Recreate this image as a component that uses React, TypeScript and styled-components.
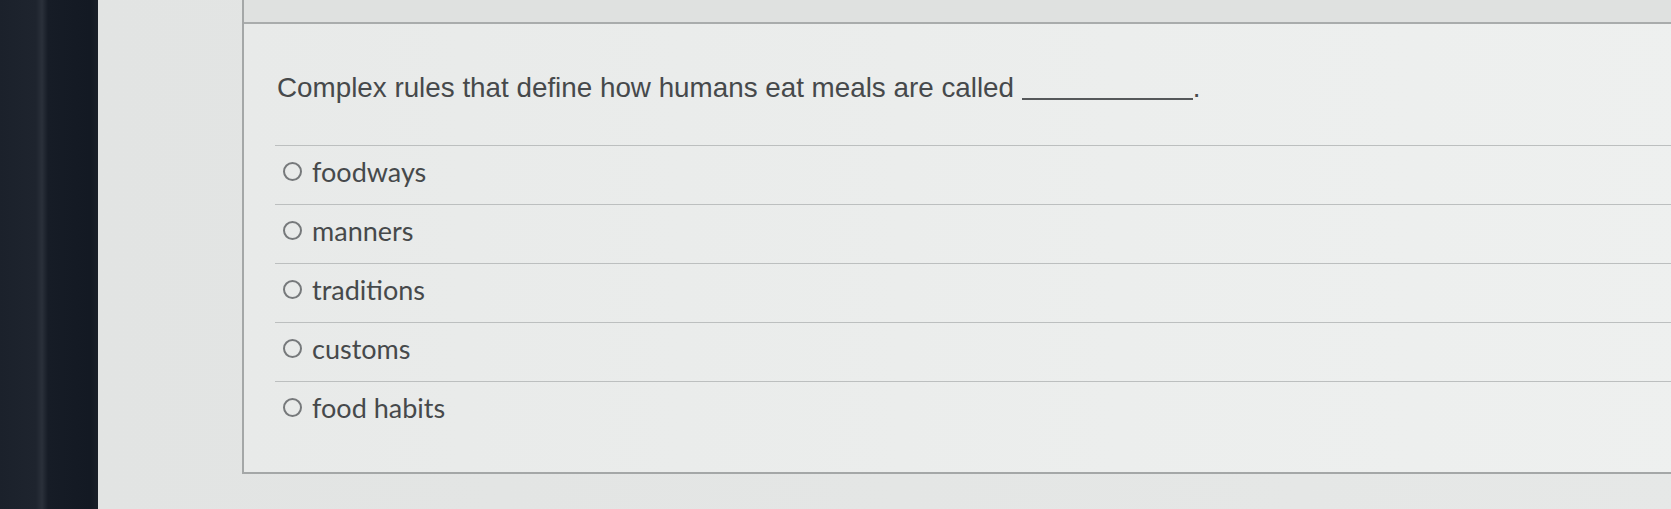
import React from "react";
import styled, { createGlobalStyle } from "styled-components";

const GlobalStyle = createGlobalStyle`
  html, body {
    margin: 0;
    padding: 0;
    overflow: hidden;
    background: #e3e5e4;
  }
`;

const Screen = styled.div`
  display: flex;
  width: 1671px;
  height: 509px;
  overflow: hidden;
`;

const Bezel = styled.div`
  flex: 0 0 98px;
  background: linear-gradient(
    90deg,
    #1b212b 0px,
    #1e242e 36px,
    #2a303a 42px,
    #161c26 48px,
    #131923 90px,
    #1a2029 98px
  );
`;

const Page = styled.div`
  flex: 1;
  display: flex;
  padding-left: 144px;
  background: linear-gradient(90deg, #e2e4e3 0%, #e6e8e7 100%);
`;

const Card = styled.section`
  flex: 0 0 1460px;
  height: 474px;
  display: flex;
  flex-direction: column;
  border-left: 2px solid #a4a7a7;
  border-bottom: 2px solid #a4a7a7;
  background: linear-gradient(90deg, #e8eae9 0%, #eceeed 60%, #eef0ef 100%);
  box-sizing: border-box;
`;

const Header = styled.div`
  flex: 0 0 22px;
  background: #dfe1e0;
  border-bottom: 2px solid #a9acac;
`;

const Body = styled.div`
  display: flex;
  flex-direction: column;
  padding: 47px 0 30px 31px;
`;

const Question = styled.p`
  margin: 0 0 40px 2px;
  font-family: "Liberation Sans", Arial, sans-serif;
  font-size: 27.8px;
  line-height: 34px;
  color: #46494b;
`;

const Blank = styled.span`
  display: inline-block;
  width: 171px;
  height: 20px;
  margin-bottom: -3px;
  border-bottom: 2px solid #55585a;
`;

const Options = styled.ul`
  list-style: none;
  margin: 0;
  padding: 0;
`;

const Option = styled.li`
  display: flex;
  align-items: center;
  gap: 10px;
  height: 59px;
  padding: 0 0 8px 8px;
  box-sizing: border-box;
  border-top: 1px solid #bcbfbf;
  font-family: Lato, "Noto Sans", sans-serif;
  font-size: 27px;
  color: #46494b;
`;

const Radio = styled.span`
  flex: 0 0 19px;
  box-sizing: border-box;
  width: 19px;
  height: 19px;
  border: 2px solid #76797b;
  border-radius: 50%;
`;

const choices = ["foodways", "manners", "traditions", "customs", "food habits"];

export default function App() {
  return (
    <>
      <GlobalStyle />
      <Screen>
        <Bezel />
        <Page>
          <Card>
            <Header />
            <Body>
              <Question>
                Complex rules that define how humans eat meals are called <Blank />.
              </Question>
              <Options>
                {choices.map((c) => (
                  <Option key={c}>
                    <Radio />
                    {c}
                  </Option>
                ))}
              </Options>
            </Body>
          </Card>
        </Page>
      </Screen>
    </>
  );
}
